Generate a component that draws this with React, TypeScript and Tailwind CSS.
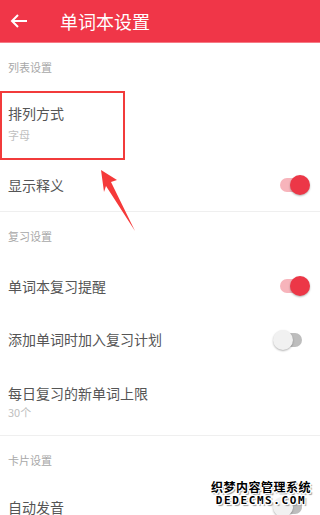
import React from "react";

function Toggle({ on }: { on: boolean }) {
  return (
    <div className="relative w-[37px] h-[20px] shrink-0">
      <div
        className={`absolute left-[7px] right-[8px] top-[3px] h-[14px] rounded-full ${
          on ? "bg-[#f7b4bb]" : "bg-[#bdbdbd]"
        }`}
      />
      <div
        className={`absolute top-0 w-[20px] h-[20px] rounded-full shadow-[0_1px_2px_rgba(0,0,0,0.3)] ${
          on ? "right-0 bg-[#ec3747]" : "left-0 bg-[#f1f1f1]"
        }`}
      />
    </div>
  );
}

function Section({ title }: { title: string }) {
  return (
    <div className="h-[48px] flex items-center pl-2 text-[11px] text-[#a8a8a8]">{title}</div>
  );
}

function Row({ title, h, toggle }: { title: string; h: string; toggle?: boolean }) {
  return (
    <div className={`${h} flex items-center justify-between pl-2 pr-[10px]`}>
      <span className="text-[14px] text-[#555555]">{title}</span>
      {toggle !== undefined && <Toggle on={toggle} />}
    </div>
  );
}

export default function App() {
  return (
    <div
      className="relative w-[320px] h-[515px] overflow-hidden bg-white"
      style={{ fontFamily: '"Noto Sans CJK SC", "Noto Sans", sans-serif' }}
    >
      <div className="h-[43px] bg-[#f03648] flex items-center border-b border-[#f67a85]">
        <svg width="18" height="14" viewBox="0 0 18 14" className="ml-[10px]">
          <path d="M17 7H2M8 1L2 7l6 6" fill="none" stroke="#fff" strokeWidth="2" />
        </svg>
        <span className="ml-[32px] text-[18px] text-white leading-none">单词本设置</span>
      </div>

      <Section title="列表设置" />
      <div className="relative h-[68px] pl-2 pt-[12px] flex flex-col">
        <span className="text-[14px] leading-[20px] text-[#555555]">排列方式</span>
        <span className="mt-[4px] text-[11px] leading-[16px] text-[#c0c0c0]">字母</span>
        <div className="absolute left-0 top-0 w-[125px] h-[69px] border-[2.5px] border-[#f23b3b]" />
      </div>
      <Row title="显示释义" h="h-[52px]" toggle={true} />
      <div className="h-px bg-[#efefef]" />

      <Section title="复习设置" />
      <Row title="单词本复习提醒" h="h-[52px]" toggle={true} />
      <Row title="添加单词时加入复习计划" h="h-[55px]" toggle={false} />
      <div className="h-[68px] pl-2 pt-[16px] flex flex-col">
        <span className="text-[14px] leading-[20px] text-[#555555]">每日复习的新单词上限</span>
        <span className="mt-[1px] text-[11px] leading-[16px] text-[#c0c0c0]">30个</span>
      </div>
      <div className="h-px bg-[#efefef]" />

      <Section title="卡片设置" />
      <Row title="自动发音" h="h-[46px]" toggle={false} />

      <svg
        className="absolute left-0 top-0 pointer-events-none"
        width="320"
        height="515"
        viewBox="0 0 320 515"
      >
        <polygon
          points="101,170 117,180 111,182 135,231 106,186 104,192"
          fill="#f53a3a"
        />
      </svg>

      <div className="absolute left-[210px] top-[481px] w-[102px] flex flex-col items-center leading-none font-bold text-black [text-shadow:1px_0_0_#fff,-1px_0_0_#fff,0_1px_0_#fff,0_-1px_0_#fff,1px_1px_0_#fff,-1px_-1px_0_#fff,1px_-1px_0_#fff,-1px_1px_0_#fff,2px_2px_1px_#999]">
        <span className="text-[12px] tracking-[0.5px]">织梦内容管理系统</span>
        <span
          className="mt-[2px] text-[11px] tracking-[1.6px]"
          style={{ fontFamily: '"DejaVu Sans Mono", monospace' }}
        >
          DEDECMS.COM
        </span>
      </div>
    </div>
  );
}
